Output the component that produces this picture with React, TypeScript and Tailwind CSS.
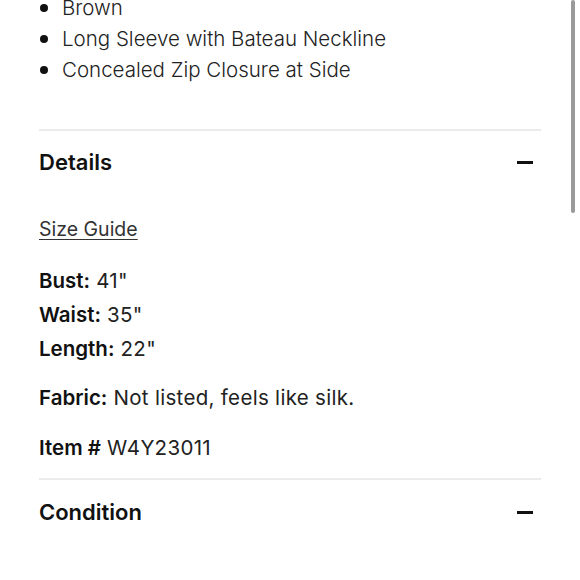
const bullets = ['Brown', 'Long Sleeve with Bateau Neckline', 'Concealed Zip Closure at Side'];

const measurements = [
  { label: 'Bust:', value: '41"' },
  { label: 'Waist:', value: '35"' },
  { label: 'Length:', value: '22"' },
];

const SectionHeader = ({ title }: { title: string }) => (
  <div className="flex items-center justify-between">
    <h2 className="text-[22px] font-semibold leading-[28px] text-[#111]">{title}</h2>
    <span className="mr-[8px] block h-[3px] w-[16px] bg-[#111]" />
  </div>
);

const Label = ({ children }: { children: string }) => (
  <span className="font-semibold tracking-normal text-[#111]">{children}</span>
);

const App = () => {
  return (
    <div
      className="relative h-[580px] w-[580px] overflow-hidden bg-white text-[#222]"
      style={{ fontFamily: 'Inter, "Noto Sans", sans-serif' }}
    >
      <div className="mx-[39px] -mt-[8px]">
        <ul className="flex flex-col">
          {bullets.map((b) => (
            <li key={b} className="flex items-center text-[20.5px] font-light leading-[31px]">
              <span className="ml-[1px] mr-[14px] block h-[8px] w-[8px] rounded-full bg-[#111]" />
              {b}
            </li>
          ))}
        </ul>

        <div className="mt-[44px] h-[2px] bg-[#ebebeb]" />

        <div className="mt-[17px]">
          <SectionHeader title="Details" />
        </div>

        <div className="mt-[39px] text-[19.5px] leading-[28px]">
          <a className="text-[#333] underline decoration-1 underline-offset-[3px]">Size Guide</a>
        </div>

        <div className="mt-[21px] flex flex-col text-[20.5px] tracking-[0.015em] leading-[34px]">
          {measurements.map((m) => (
            <div key={m.label}>
              <Label>{m.label}</Label> {m.value}
            </div>
          ))}
        </div>

        <div className="mt-[15px] text-[20.5px] tracking-[0.015em] leading-[34px]">
          <Label>Fabric:</Label> Not listed, feels like silk.
        </div>

        <div className="mt-[16px] text-[20.5px] tracking-[0.015em] leading-[34px]">
          <Label>Item #</Label> W4Y23011
        </div>

        <div className="mt-[13px] h-[2px] bg-[#ebebeb]" />

        <div className="mt-[18px]">
          <SectionHeader title="Condition" />
        </div>
      </div>

      <div className="absolute right-[5px] top-0 h-[213px] w-[4px] rounded-full bg-[#9a9a9a]" />
    </div>
  );
};

export default App;
